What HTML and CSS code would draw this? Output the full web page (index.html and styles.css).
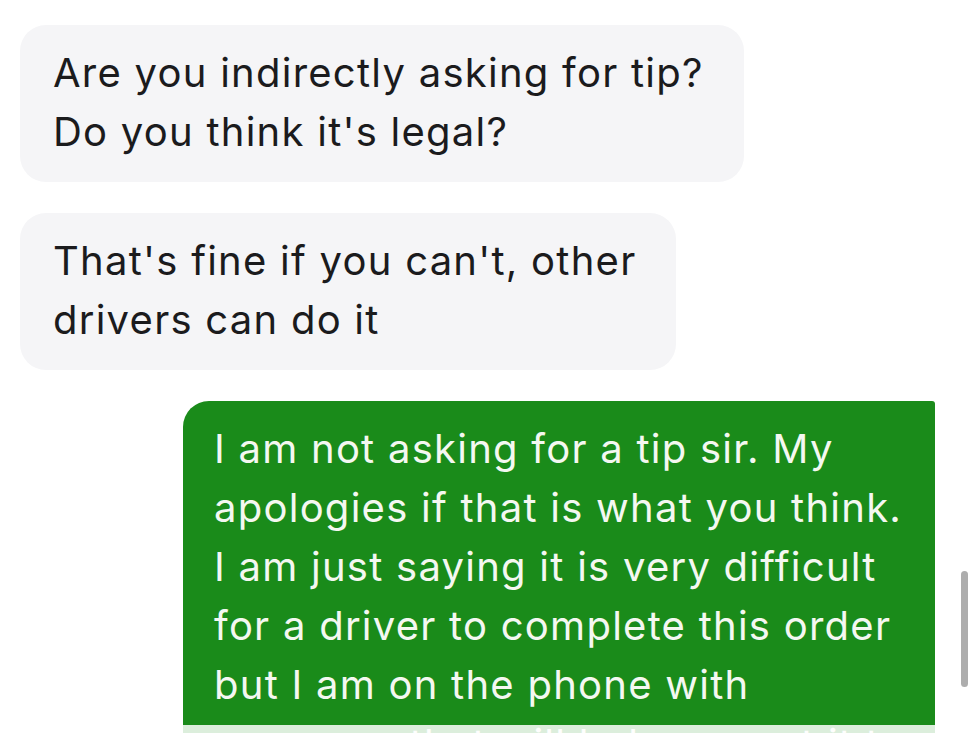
FILE: index.html
```html
<!DOCTYPE html>
<html lang="en">
<head>
<meta charset="utf-8">
<title>Chat</title>
<link rel="stylesheet" href="styles.css">
</head>
<body>
<main class="chat">
  <div class="bubble bubble--in">Are you indirectly asking for tip?<br>Do you think it's legal?</div>
  <div class="bubble bubble--in">That's fine if you can't, other<br>drivers can do it</div>
  <div class="bubble bubble--out">I am not asking for a tip sir. My<br>apologies if that is what you think.<br>I am just saying it is very difficult<br>for a driver to complete this order<br>but I am on the phone with<br>someone that will help me get it to you</div>
  <div class="fade"></div>
  <div class="scrollbar"></div>
</main>
</body>
</html>
```
FILE: styles.css
```css
html, body {
  margin: 0;
  padding: 0;
  background: #ffffff;
  overflow: hidden;
}
.chat {
  position: relative;
  height: 733px;
  overflow: hidden;
  display: flex;
  flex-direction: column;
  align-items: flex-start;
  gap: 31px;
  padding: 25px 45px 0 20px;
  box-sizing: border-box;
  font-family: Inter, "Liberation Sans", sans-serif;
  font-size: 40px;
  line-height: 59px;
  letter-spacing: 1.25px;
  white-space: nowrap;
}
.bubble {
  padding: 18px 40px 21px 33px;
  border-radius: 26px;
}
.bubble--in {
  background: #f5f5f7;
  color: #1b1b1d;
}
.bubble--out {
  align-self: flex-end;
  width: 752px;
  box-sizing: border-box;
  padding: 18px 20px 21px 31px;
  background: #1a8b1a;
  color: #f4f8f1;
  border-radius: 26px 3px 0 0;
  overflow: hidden;
}
.fade {
  position: absolute;
  left: 0;
  right: 0;
  bottom: 0;
  height: 8px;
  background: rgba(255, 255, 255, 0.85);
}
.scrollbar {
  position: absolute;
  left: 961px;
  top: 571px;
  width: 7px;
  height: 116px;
  border-radius: 4px;
  background: #adadad;
}
```
